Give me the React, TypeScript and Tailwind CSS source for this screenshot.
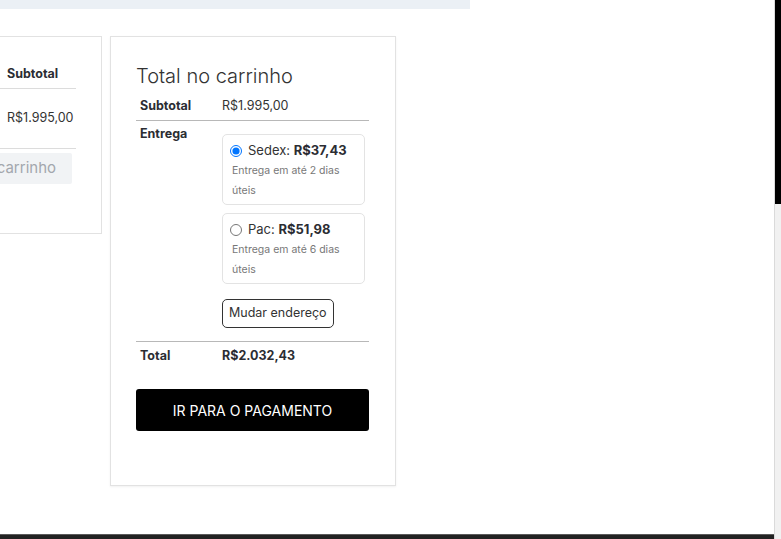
import React from 'react';

type Option = {
  id: string;
  name: string;
  price: string;
  days: string;
  checked: boolean;
};

const options: Option[] = [
  { id: 'sedex', name: 'Sedex:', price: 'R$37,43', days: 'Entrega em até 2 dias úteis', checked: true },
  { id: 'pac', name: 'Pac:', price: 'R$51,98', days: 'Entrega em até 6 dias úteis', checked: false },
];

function CartTablePeek() {
  // only the right edge of the cart table shows at this scroll position
  return (
    <div className="h-[198px] w-[102px] overflow-hidden border-y border-r border-[#e2e2e2] bg-white pt-[24px]">
      <div className="w-[76px] text-[12.5px] text-[#333]">
        <div className="flex h-[28px] items-center border-b border-[#dcdcdc] pl-[7px] font-bold text-[#2b2d33]">Subtotal</div>
        <div className="flex h-[60px] items-center border-b border-[#dcdcdc] pl-[7px]">R$1.995,00</div>
        <div className="mt-[4px] mr-[4px] flex justify-end overflow-hidden">
          <button className="h-[31px] shrink-0 rounded-[2px] bg-[#f1f3f5] pr-[16px] pl-[14px] text-[15px] text-[#a3a7ad]">
            Atualizar carrinho
          </button>
        </div>
      </div>
    </div>
  );
}

function ShippingOption({ option }: { option: Option }) {
  return (
    <label className="block rounded-[5px] border border-[#e3e3e3] pt-[6px] pr-[8px] pb-[3px] pl-[9px]">
      <span className="flex h-[20px] items-center text-[13px] text-[#333]">
        <input
          type="radio"
          name="frete"
          checked={option.checked}
          readOnly
          className="m-0 mr-[6px] ml-[-2px] h-[12px] w-[12px] accent-[#0075ff]"
        />
        {option.name}&nbsp;<strong className="font-bold text-[#2b2d33]">{option.price}</strong>
      </span>
      <span className="block text-[10.5px] leading-[20px] text-[#777]">{option.days}</span>
    </label>
  );
}

function CartTotals() {
  return (
    <div className="h-[450px] w-[286px] border border-[#e2e2e2] bg-white px-[25px] pt-[25px] shadow-[0_1px_2px_rgba(0,0,0,0.06)]">
      <h2 className="text-[20px] leading-[28px] font-light text-[#333]">Total no carrinho</h2>

      <div className="w-[233px] text-[12.5px] text-[#333]">
        <div className="flex h-[31px] items-center border-b border-[#b8b8b8] pt-[2px]">
          <span className="w-[86px] pl-[4px] font-bold text-[#2b2d33]">Subtotal</span>
          <span>R$1.995,00</span>
        </div>

        <div className="flex border-b border-[#b8b8b8] pt-[4px] pb-[13px]">
          <span className="w-[86px] pl-[4px] font-bold text-[#2b2d33]">Entrega</span>
          <div className="w-[143px] pt-[9px]">
            <div className="flex flex-col gap-[8px]">
              {options.map((o) => (
                <ShippingOption key={o.id} option={o} />
              ))}
            </div>
            <button className="mt-[15px] h-[29px] rounded-[5px] border border-[#333] px-[6px] text-[12.5px] text-[#333]">
              Mudar endereço
            </button>
          </div>
        </div>

        <div className="flex h-[29px] items-center font-bold text-[#2b2d33]">
          <span className="w-[86px] pl-[4px]">Total</span>
          <span>R$2.032,43</span>
        </div>
      </div>

      <button className="mt-[18px] h-[42px] w-[233px] rounded-[3px] bg-black text-[14px] text-white uppercase">
        Ir para o pagamento
      </button>
    </div>
  );
}

export default function App() {
  return (
    <div className="flex h-[539px] overflow-hidden bg-white font-['Inter',sans-serif]">
      <div className="flex flex-1 flex-col">
        <div className="h-[9px] w-[470px] bg-[#ebf0f5]" />
        <div className="mt-[27px] flex items-start gap-[8px]">
          <CartTablePeek />
          <CartTotals />
        </div>
        <footer className="mt-auto h-[5px] border-t border-[#5a5a5a] bg-[#222]" />
      </div>
      <div className="flex w-[7px] flex-col border-l border-[#dadada] bg-[#f1f1f1]">
        <div className="h-[204px] bg-black" />
      </div>
    </div>
  );
}
